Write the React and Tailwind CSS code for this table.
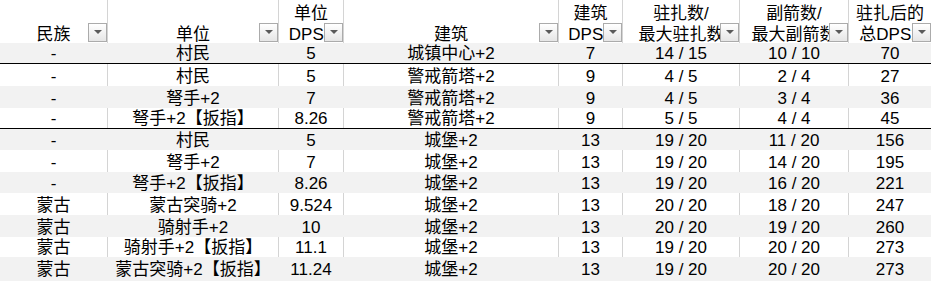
import React from "react";

const W = [
  "w-[108px]",
  "w-[171px]",
  "w-[65px]",
  "w-[215px]",
  "w-[64px]",
  "w-[117px]",
  "w-[109px]",
  "w-[82px]",
];

const headers = [
  ["民族"],
  ["单位"],
  ["单位", "DPS2"],
  ["建筑"],
  ["建筑", "DPS2"],
  ["驻扎数/", "最大驻扎数"],
  ["副箭数/", "最大副箭数"],
  ["驻扎后的", "总DPS2"],
];

const rows = [
  { h: "h-[21px]", black: true, d: ["-", "村民", "5", "城镇中心+2", "7", "14 / 15", "10 / 10", "70"] },
  { h: "h-[22px]", d: ["-", "村民", "5", "警戒箭塔+2", "9", "4 / 5", "2 / 4", "27"] },
  { h: "h-[22px]", d: ["-", "弩手+2", "7", "警戒箭塔+2", "9", "4 / 5", "3 / 4", "36"] },
  { h: "h-[21px]", black: true, d: ["-", "弩手+2【扳指】", "8.26", "警戒箭塔+2", "9", "5 / 5", "4 / 4", "45"] },
  { h: "h-[21px]", d: ["-", "村民", "5", "城堡+2", "13", "19 / 20", "11 / 20", "156"] },
  { h: "h-[22px]", d: ["-", "弩手+2", "7", "城堡+2", "13", "19 / 20", "14 / 20", "195"] },
  { h: "h-[21px]", d: ["-", "弩手+2【扳指】", "8.26", "城堡+2", "13", "19 / 20", "16 / 20", "221"] },
  { h: "h-[22px]", d: ["蒙古", "蒙古突骑+2", "9.524", "城堡+2", "13", "20 / 20", "18 / 20", "247"] },
  { h: "h-[22px]", d: ["蒙古", "骑射手+2", "10", "城堡+2", "13", "20 / 20", "19 / 20", "260"] },
  { h: "h-[20px]", d: ["蒙古", "骑射手+2【扳指】", "11.1", "城堡+2", "13", "19 / 20", "20 / 20", "273"] },
  { h: "h-[24px]", last: true, d: ["蒙古", "蒙古突骑+2【扳指】", "11.24", "城堡+2", "13", "19 / 20", "20 / 20", "273"] },
];

function FilterBtn() {
  return (
    <div className="absolute right-0 bottom-[1px] w-[19px] h-[19px] border border-[#ababab] bg-linear-to-b from-white to-[#e6e6e6] flex items-center justify-center">
      <svg width="8" height="4" viewBox="0 0 8 4" className="mb-[1px]">
        <path d="M0 0H8L4 4Z" fill="#5a5a5a" />
      </svg>
    </div>
  );
}

export default function App() {
  return (
    <div
      className="w-[931px] h-[281px] overflow-hidden bg-white text-black text-[17px]"
      style={{ fontFamily: '"Liberation Sans", "Noto Sans CJK SC", sans-serif' }}
    >
      {/* header */}
      <div className="flex h-[43px]">
        {headers.map((lines, i) => (
          <div
            key={i}
            className={`${W[i]} relative flex flex-col items-center justify-end gap-[5px] whitespace-nowrap ${
              i < 7 ? "border-r border-[#d4d4d4]" : ""
            }`}
          >
            {lines.map((l, j) => (
              <div key={j} className="leading-[16px]">
                {l}
              </div>
            ))}
            <FilterBtn />
          </div>
        ))}
      </div>
      {/* rows */}
      {rows.map((r, ri) => {
        const gray = ri % 2 === 0;
        return (
          <div
            key={ri}
            className={`flex ${r.h} ${gray ? "bg-[#f2f2f2]" : "bg-white"} ${
              r.black ? "border-b border-black" : ""
            } ${r.last ? "pb-[2px]" : ""}`}
          >
            {r.d.map((c, ci) => (
              <div
                key={ci}
                className={`${W[ci]} flex items-end justify-center whitespace-nowrap leading-[16px] pb-[1px] ${
                  ci < 7 ? (gray ? "border-r border-transparent" : "border-r border-[#d4d4d4]") : ""
                }`}
              >
                {c}
              </div>
            ))}
          </div>
        );
      })}
    </div>
  );
}
